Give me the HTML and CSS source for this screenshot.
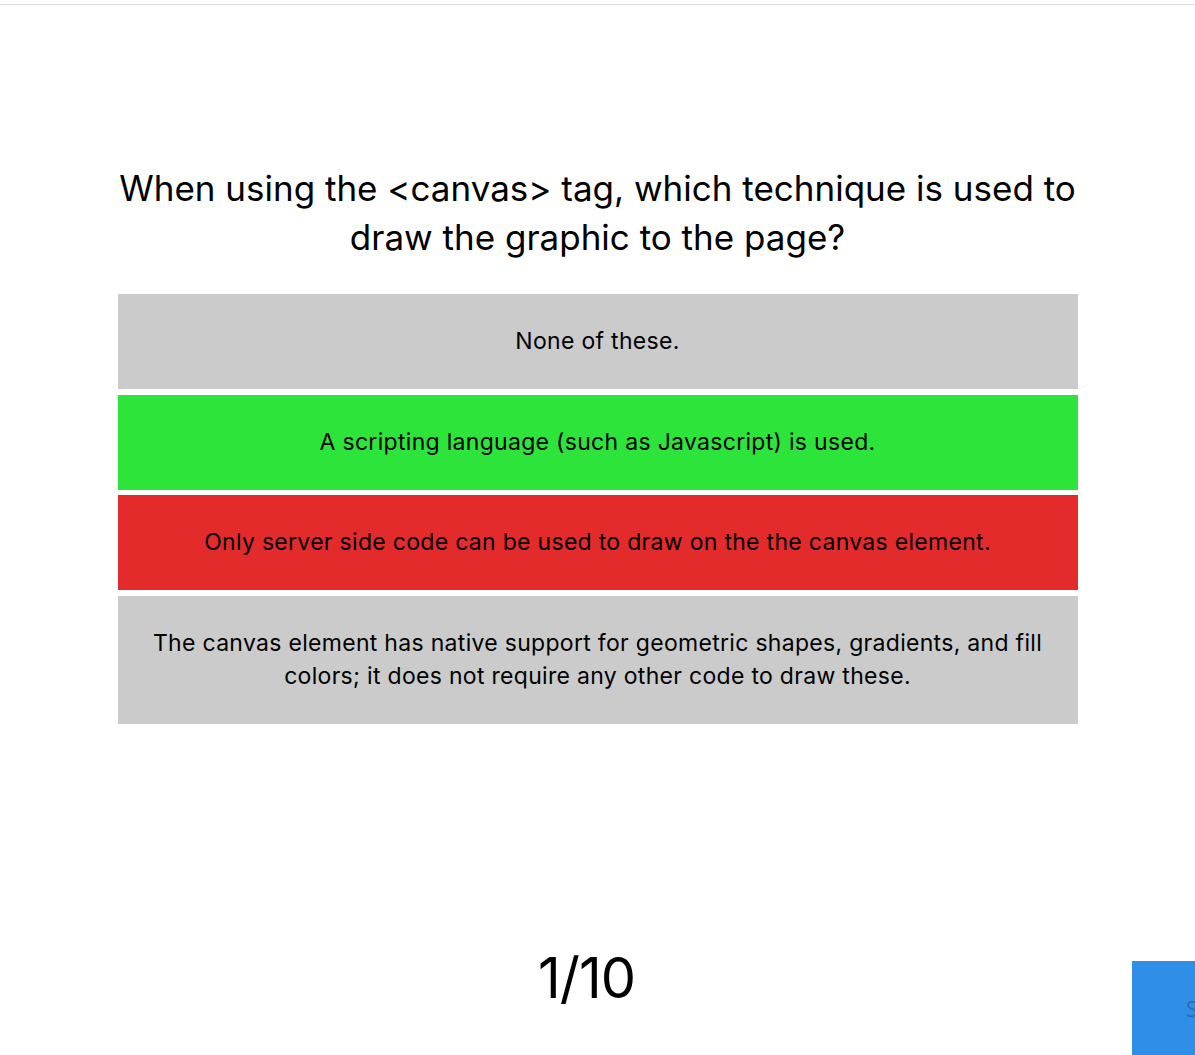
FILE: index.html
```html
<!DOCTYPE html>
<html lang="en">
<head>
    <meta charset="UTF-8" />
    <title>Quiz</title>
    <link rel="stylesheet" href="styles.css">
</head>
<body>
    <header class="topbar"></header>
    <main class="quiz">
        <h1 class="question">When using the &lt;canvas&gt; tag, which technique is used to draw the graphic to the page?</h1>
        <ul class="answers">
            <li class="answer">None of these.</li>
            <li class="answer right">A scripting language (such as Javascript) is used.</li>
            <li class="answer wrong">Only server side code can be used to draw on the the canvas element.</li>
            <li class="answer">The canvas element has native support for geometric shapes, gradients, and fill colors; it does not require any other code to draw these.</li>
        </ul>
        <div class="counter">1/10</div>
    </main>
    <button class="next">Submit</button>
</body>
</html>
```

FILE: styles.css
```css
*{
    margin:0;
    padding:0;
    box-sizing: border-box;
}
body{
    font-family: "Inter", "Open Sans", sans-serif;
    color: #000;
    background: #fff;
    overflow: hidden;
}
.topbar{
    height: 5px;
    border-bottom: 1px solid #dcdcdc;
}
.quiz{
    width: 960px;
    margin: 0 auto;
    padding-top: 159px;
    display: flex;
    flex-direction: column;
}
.question{
    font-size: 35px;
    font-weight: 400;
    line-height: 49px;
    text-align: center;
    letter-spacing: 0;
}
.answers{
    list-style: none;
    margin-top: 32px;
    display: flex;
    flex-direction: column;
    gap: 5.5px;
}
.answer{
    background-color: #cbcbcb;
    padding: 31px 30px;
    font-size: 23px;
    line-height: 33px;
    text-align: center;
    letter-spacing: 0.3px;
}
.answer.right{
    background-color: #2de43b;
}
.answer.wrong{
    background-color: #e32b2b;
}
.counter{
    margin-top: 222px;
    text-align: center;
    font-size: 56px;
    line-height: 64px;
    letter-spacing: -1px;
    padding-right: 22px;
}
.next{
    position: fixed;
    left: 1132px;
    top: 961px;
    width: 140px;
    height: 94px;
    border: none;
    background-color: #2f8fe6;
    color: #2a6cb0;
    font-family: "Open Sans", sans-serif;
    font-size: 22px;
    text-align: left;
    padding-left: 54px;
}
```
